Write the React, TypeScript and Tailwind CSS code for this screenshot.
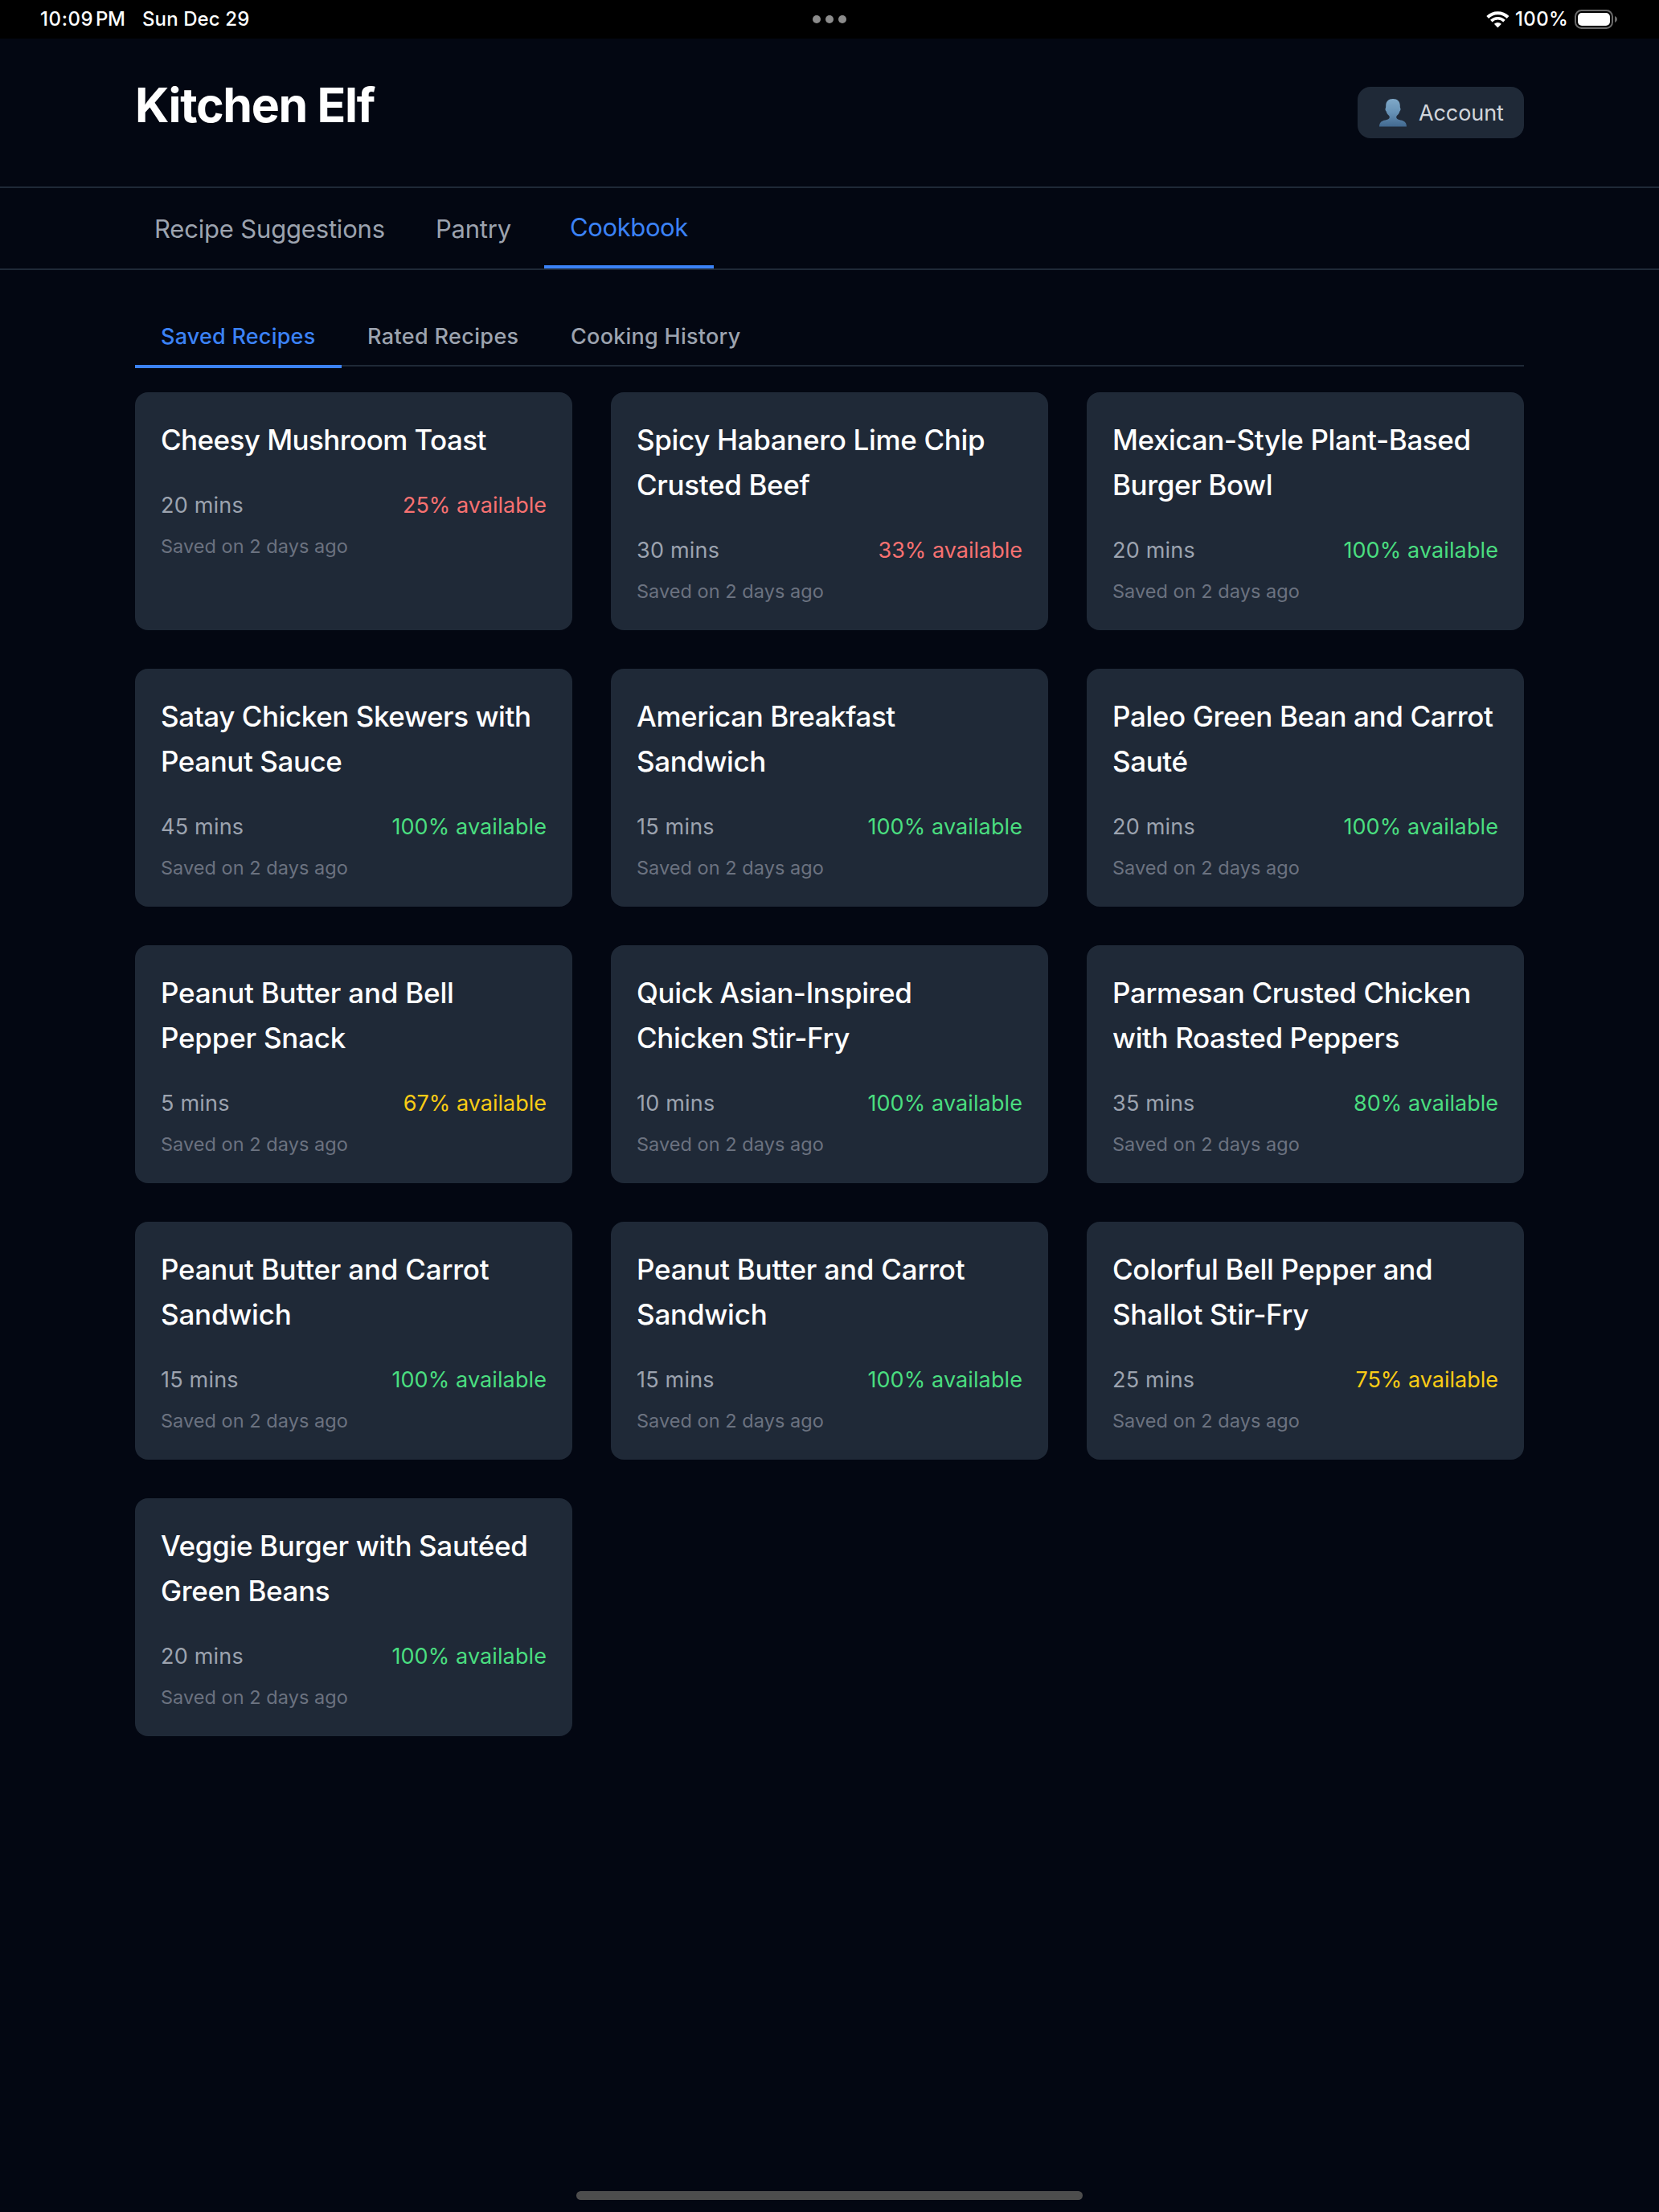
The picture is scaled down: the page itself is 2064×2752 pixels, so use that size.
type Recipe = {
  title: string;
  mins: number;
  available: number;
  tracking?: string;
};

const recipes: Recipe[] = [
  { title: 'Cheesy Mushroom Toast', mins: 20, available: 25, tracking: 'tracking-[-0.57px]' },
  { title: 'Spicy Habanero Lime Chip Crusted Beef', mins: 30, available: 33, tracking: 'tracking-[-0.35px]' },
  { title: 'Mexican-Style Plant-Based Burger Bowl', mins: 20, available: 100 },
  { title: 'Satay Chicken Skewers with Peanut Sauce', mins: 45, available: 100, tracking: 'tracking-[-0.43px]' },
  { title: 'American Breakfast Sandwich', mins: 15, available: 100, tracking: 'tracking-[-0.43px]' },
  { title: 'Paleo Green Bean and Carrot Sauté', mins: 20, available: 100 },
  { title: 'Peanut Butter and Bell Pepper Snack', mins: 5, available: 67, tracking: 'tracking-[-0.22px]' },
  { title: 'Quick Asian-Inspired Chicken Stir-Fry', mins: 10, available: 100 },
  { title: 'Parmesan Crusted Chicken with Roasted Peppers', mins: 35, available: 80 },
  { title: 'Peanut Butter and Carrot Sandwich', mins: 15, available: 100, tracking: 'tracking-[-0.22px]' },
  { title: 'Peanut Butter and Carrot Sandwich', mins: 15, available: 100, tracking: 'tracking-[-0.22px]' },
  { title: 'Colorful Bell Pepper and Shallot Stir-Fry', mins: 25, available: 75, tracking: 'tracking-[-0.32px]' },
  { title: 'Veggie Burger with Sautéed Green Beans', mins: 20, available: 100, tracking: 'tracking-[-0.35px]' },
];

function availabilityColor(percent: number) {
  if (percent >= 80) return 'text-[#4ade80]';
  if (percent >= 50) return 'text-[#facc15]';
  return 'text-[#f87171]';
}

function WifiIcon() {
  return (
    <svg width="29" height="21" viewBox="0 0 29 21" fill="none" aria-hidden="true">
      <path d="M1.7 7.5A18 18 0 0 1 27.1 7.5" stroke="#fff" strokeWidth="3.9" />
      <path d="M6.3 12.1A11.5 11.5 0 0 1 22.5 12.1" stroke="#fff" strokeWidth="3.6" />
      <path d="M9.9 15.8A6.3 6.3 0 0 1 18.9 15.8L14.9 19.9Q14.4 20.4 13.9 19.9Z" fill="#fff" />
    </svg>
  );
}

function BatteryIcon() {
  return (
    <svg width="54" height="24" viewBox="0 0 54 24" fill="none" aria-hidden="true">
      <rect x="1" y="1" width="46" height="22" rx="7.5" stroke="#6b6b6b" strokeWidth="2" />
      <rect x="4" y="4" width="40" height="16" rx="5" fill="#fff" />
      <path d="M50 8C51.8 8.8 53 10.2 53 12C53 13.8 51.8 15.2 50 16Z" fill="#6b6b6b" />
    </svg>
  );
}

function PersonIcon() {
  return (
    <svg width="34" height="35" viewBox="0 0 34 35" aria-hidden="true">
      <defs>
        <linearGradient id="person" x1="0" y1="0" x2="0" y2="1">
          <stop offset="0" stopColor="#80a9c9" />
          <stop offset="0.5" stopColor="#6691b5" />
          <stop offset="1" stopColor="#41688f" />
        </linearGradient>
      </defs>
      <path
        d="M17 0C22.6 0 25.7 3.2 25.8 8.2C25.8 9.3 25.8 10.2 26 11.2C26.9 11.6 26.6 14.6 25.4 15.4C24.9 17.6 23.6 19.3 22 20.8C21.2 21.8 21.1 23 21.5 24C22.1 25.3 24 25.9 26.6 26.4C31.3 27.2 33.9 29.4 34 34.6H0C0.1 29.4 2.7 27.2 7.4 26.4C10 25.9 11.9 25.3 12.5 24C12.9 23 12.8 21.8 12 20.8C10.4 19.3 9.1 17.6 8.6 15.4C7.4 14.6 7.1 11.6 8 11.2C8.2 10.2 8.2 9.3 8.2 8.2C8.3 3.2 11.4 0 17 0Z"
        fill="url(#person)"
      />
    </svg>
  );
}

function StatusBar() {
  return (
    <div className="grid h-12 grid-cols-3 items-center bg-black text-[24px] leading-[30px] font-medium text-white">
      <div className="flex items-center pl-[50px]">
        <span className="w-[69px] tracking-[0.6px]">10:09</span>
        <span className="w-[58px] tracking-[-0.5px]">PM</span>
        <span className="tracking-[0.1px]">Sun Dec 29</span>
      </div>
      <div className="flex items-center justify-center gap-[6px]">
        <span className="size-[10px] rounded-full bg-[#8c8c8c]" />
        <span className="size-[10px] rounded-full bg-[#8c8c8c]" />
        <span className="size-[10px] rounded-full bg-[#8c8c8c]" />
      </div>
      <div className="flex items-center justify-end pr-[51px]">
        <WifiIcon />
        <span className="w-[74px] pl-[7px] tracking-[0.35px]">100%</span>
        <span className="pl-[7px]">
          <BatteryIcon />
        </span>
      </div>
    </div>
  );
}

function RecipeCard({ recipe }: { recipe: Recipe }) {
  return (
    <article className="h-[296px] rounded-[16px] bg-[#1f2937] px-8 pt-[31px]">
      <h3 className={`text-[35px] leading-[56px] font-medium text-white ${recipe.tracking ?? 'tracking-[-0.39px]'}`}>
        {recipe.title}
      </h3>
      <div className="mt-[34px] flex justify-between text-[27px] leading-[40px]">
        <span className="tracking-[0.2px] text-[#9ca3af]">{recipe.mins} mins</span>
        <span
          className={`${recipe.available === 100 ? 'tracking-[0.1px]' : 'tracking-[0px]'} ${availabilityColor(recipe.available)}`}
        >
          {recipe.available}% available
        </span>
      </div>
      <p className="mt-[15px] text-[23.5px] leading-[32px] tracking-[0.04px] text-[#6b7280]">Saved on 2 days ago</p>
    </article>
  );
}

export default function App() {
  return (
    <div className="flex h-[2752px] w-full flex-col bg-[#030712] font-['Inter',sans-serif] antialiased">
      <StatusBar />

      <header className="flex h-[186px] items-start justify-between border-b-2 border-[#1f2937] px-[168px]">
        <h1 className="mt-[47px] text-[59px] leading-[72px] font-bold tracking-[-1.33px] text-white">Kitchen Elf</h1>
        <button className="mt-[60px] flex h-[64px] w-[207px] items-center rounded-[16px] bg-[#1f2937] pl-[27px] text-[27px] leading-[40px] tracking-[-0.1px] text-[#d1d5db]">
          <PersonIcon />
          <span className="ml-[15px] pt-[2px]">Account</span>
        </button>
      </header>

      <nav className="flex h-[102px] border-b-2 border-[#1f2937] pl-[160px] text-[31px] text-[#9ca3af]">
        <a className="flex w-[350px] items-center pt-[2px] pl-8 tracking-[-0.18px]">Recipe Suggestions</a>
        <a className="flex w-[167px] items-center pt-[2px] pl-8 tracking-[-0.22px]">Pantry</a>
        <a className="flex w-[211px] items-center border-b-4 border-[#3b82f6] pt-[2px] pl-8 tracking-[-0.38px] text-[#3b82f6]">
          Cookbook
        </a>
      </nav>

      <main className="px-[168px] pt-[46px]">
        <div className="flex h-[74px] border-b-2 border-[#1f2937] text-[27px] font-medium text-[#9ca3af]">
          <a className="-mb-1 flex h-[76px] w-[257px] items-center border-b-4 border-[#3b82f6] pt-[2px] pl-8 tracking-[0.22px] text-[#3b82f6]">
            Saved Recipes
          </a>
          <a className="flex w-[253px] items-center pt-[2px] pl-8 tracking-[0.36px]">Rated Recipes</a>
          <a className="flex items-center pt-[2px] pl-8 tracking-[0.26px]">Cooking History</a>
        </div>

        <section className="mt-8 grid grid-cols-3 gap-12">
          {recipes.map((recipe, i) => (
            <RecipeCard key={i} recipe={recipe} />
          ))}
        </section>
      </main>

      <div className="mt-auto mb-[15px] h-[11px] w-[630px] self-center rounded-full bg-[#4d4d4d]" />
    </div>
  );
}
